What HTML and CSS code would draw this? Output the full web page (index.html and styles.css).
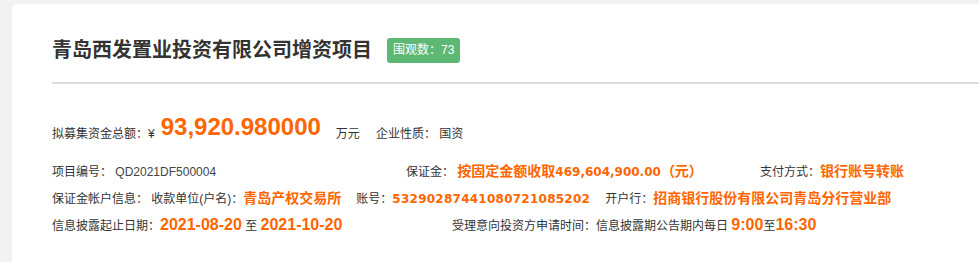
FILE: index.html
```html
<!DOCTYPE html>
<html lang="zh-CN">
<head>
    <meta charset="UTF-8">
    <meta name="viewport" content="width=device-width, initial-scale=1.0">
    <title>青岛西发置业投资有限公司增资项目</title>
    <link rel="stylesheet" href="styles.css">
</head>
<body>
    <div class="project-card">
        <div class="project-head">
            <h1>青岛西发置业投资有限公司增资项目</h1>
            <span class="views">围观数：73</span>
        </div>

        <div class="amount-row">
            拟募集资金总额：¥<span class="amount">93,920.980000</span><span class="unit">万元</span><span class="nature">企业性质：</span> 国资
        </div>

        <div class="info-row cols-3">
            <div>项目编号： <span class="code">QD2021DF500004</span></div>
            <div>保证金： <span class="val">按固定金额收取<span class="num">469,604,900.00</span>（元）</span></div>
            <div>支付方式：<span class="val">银行账号转账</span></div>
        </div>

        <div class="info-row">
            保证金帐户信息： 收款单位(户名)：<span class="val">青岛产权交易所</span><span class="item">账号：<span class="val num acct">53290287441080721085202</span></span><span class="item">开户行：<span class="val">招商银行股份有限公司青岛分行营业部</span></span>
        </div>

        <div class="info-row cols-2">
            <div>信息披露起止日期：<span class="date">2021-08-20</span> 至 <span class="date">2021-10-20</span></div>
            <div>受理意向投资方申请时间：信息披露期公告期内每日 <span class="date">9:00</span>至<span class="date">16:30</span></div>
        </div>
    </div>
</body>
</html>
```

FILE: styles.css
```css
html, body {
    overflow: hidden;
}
body {
    margin: 0;
    background-color: #f2f2f2;
    font-family: "Liberation Sans", "Noto Sans CJK SC", sans-serif;
    font-size: 12px;
    color: #333;
}
.project-card {
    margin: 4px 0 0 12px;
    width: 1100px;
    min-height: 300px;
    padding: 31px 40px 40px;
    background-color: #fff;
    border-radius: 6px;
}
.project-head {
    display: flex;
    align-items: center;
    padding-bottom: 19px;
    border-bottom: 2px solid #dcdcdc;
}
.project-head h1 {
    margin: 0;
    font-family: "Noto Sans CJK SC", sans-serif;
    font-size: 20px;
    line-height: 26px;
    font-weight: bold;
    color: #333;
}
.views {
    margin: 3px 0 0 15px;
    padding: 0 6px;
    height: 25px;
    line-height: 25px;
    font-size: 12px;
    color: #fff;
    background-color: #5db874;
    border-radius: 3px;
}
.amount-row {
    margin-top: 35px;
    height: 30px;
    line-height: 30px;
}
.amount {
    margin-left: 6px;
    font-size: 24px;
    font-weight: bold;
    line-height: 16px;
    vertical-align: 3px;
    color: #f60;
}
.unit {
    margin-left: 15px;
}
.nature {
    margin-left: 16px;
}
.info-row {
    height: 27px;
    line-height: 27px;
}
.amount-row + .info-row {
    margin-top: 10px;
}
.cols-3 {
    display: grid;
    grid-template-columns: 354px 354px auto;
}
.cols-2 {
    display: grid;
    grid-template-columns: 400px auto;
}
.code {
    color: #444;
}
.val {
    font-family: "Noto Sans CJK SC", sans-serif;
    font-size: 14px;
    font-weight: bold;
    line-height: 20px;
    color: #f60;
}
.num {
    font-family: "DejaVu Sans", sans-serif;
    font-size: 12px;
    font-weight: bold;
}
.acct {
    letter-spacing: 0.25px;
}
.item {
    margin-left: 15px;
}
.date {
    font-size: 16px;
    font-weight: bold;
    line-height: 20px;
    color: #f60;
}
```
